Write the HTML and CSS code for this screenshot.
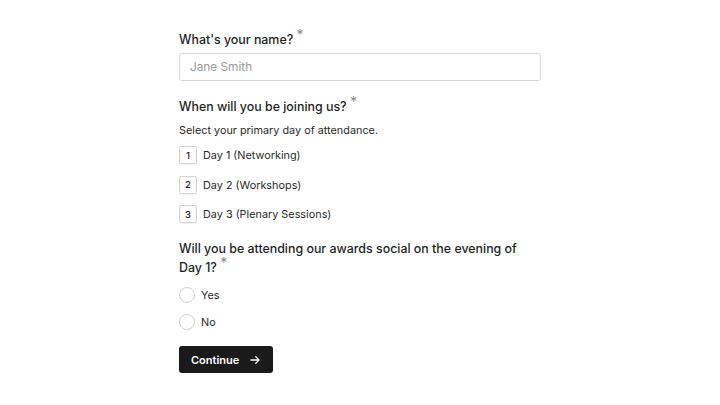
FILE: index.html
```html
<!DOCTYPE html>
<html>

<head>
    <meta charset="utf-8">
    <meta name="viewport" content="width=device-width, initial-scale=1">
    <title>Event registration</title>
    <link rel="stylesheet" href="styles.css">
</head>

<body>
    <form class="survey">
        <div class="question">
            <label class="title" for="name">What's your name? <span class="req">*</span></label>
            <input class="text" id="name" type="text" placeholder="Jane Smith">
        </div>

        <div class="question">
            <div class="title">When will you be joining us? <span class="req">*</span></div>
            <div class="hint">Select your primary day of attendance.</div>
            <div class="choices">
                <div class="choice"><span class="key">1</span>Day 1 (Networking)</div>
                <div class="choice"><span class="key">2</span>Day 2 (Workshops)</div>
                <div class="choice"><span class="key">3</span>Day 3 (Plenary Sessions)</div>
            </div>
        </div>

        <div class="question">
            <div class="title">Will you be attending our awards social on the evening of Day 1? <span class="req">*</span></div>
            <div class="radios">
                <label class="radio"><span class="dot"></span>Yes</label>
                <label class="radio"><span class="dot"></span>No</label>
            </div>
        </div>

        <button class="continue" type="button">Continue
            <svg width="12" height="12" viewBox="0 0 12 12" fill="none" stroke="#fff" stroke-width="1.3" stroke-linecap="round" stroke-linejoin="round">
                <path d="M2 6h8M6.8 2.8L10 6 6.8 9.2"/>
            </svg>
        </button>
    </form>
</body>

</html>
```

FILE: styles.css
```css
body {
    margin: 0;
    background: #fff;
    font-family: Inter, "Noto Sans", sans-serif;
    color: #222;
}

.survey {
    width: 362px;
    margin: 0 auto;
    padding-top: 30px;
}

.question {
    margin-bottom: 16px;
}

.title {
    display: block;
    font-size: 12.4px;
    font-weight: 500;
    line-height: 19px;
    color: #1f1f1f;
    margin-bottom: 4px;
}

/* required marker sits raised without growing the line */
.req {
    color: #8a8a8a;
    font-size: 14px;
    font-weight: 400;
    line-height: 0;
    vertical-align: 4px;
}

.text {
    box-sizing: border-box;
    width: 100%;
    height: 28px;
    border: 1px solid #d6d6d6;
    border-radius: 3px;
    padding: 0 10px;
    font: 11.8px Inter, sans-serif;
    color: #222;
}

.text::placeholder {
    color: #9a9a9a;
}

.hint {
    font-size: 10.85px;
    line-height: 16px;
    color: #2a2a2a;
    margin: 6px 0 8px;
}

.choices {
    display: flex;
    flex-direction: column;
    gap: 11.5px;
}

.choice {
    display: flex;
    align-items: center;
    gap: 6px;
    font-size: 10.85px;
    color: #2a2a2a;
}

.key {
    box-sizing: border-box;
    width: 18px;
    height: 18px;
    border: 1px solid #d2d2d2;
    border-radius: 2px;
    display: flex;
    align-items: center;
    justify-content: center;
    font-size: 9.5px;
    font-weight: 500;
    color: #222;
    box-shadow: 0 1px 1px rgba(0, 0, 0, 0.06);
}

.radios {
    display: flex;
    flex-direction: column;
    gap: 11px;
    margin-top: 10px;
}

.radio {
    display: flex;
    align-items: center;
    gap: 6px;
    font-size: 10.85px;
    color: #2a2a2a;
}

.dot {
    box-sizing: border-box;
    width: 16px;
    height: 16px;
    border: 1px solid #d0d0d0;
    border-radius: 50%;
}

.continue {
    display: flex;
    align-items: center;
    gap: 10px;
    height: 27px;
    margin-top: 4px;
    padding: 0 12px;
    border: none;
    border-radius: 3px;
    background: #1a1a1a;
    color: #fff;
    font: 600 11px Inter, sans-serif;
}
```
